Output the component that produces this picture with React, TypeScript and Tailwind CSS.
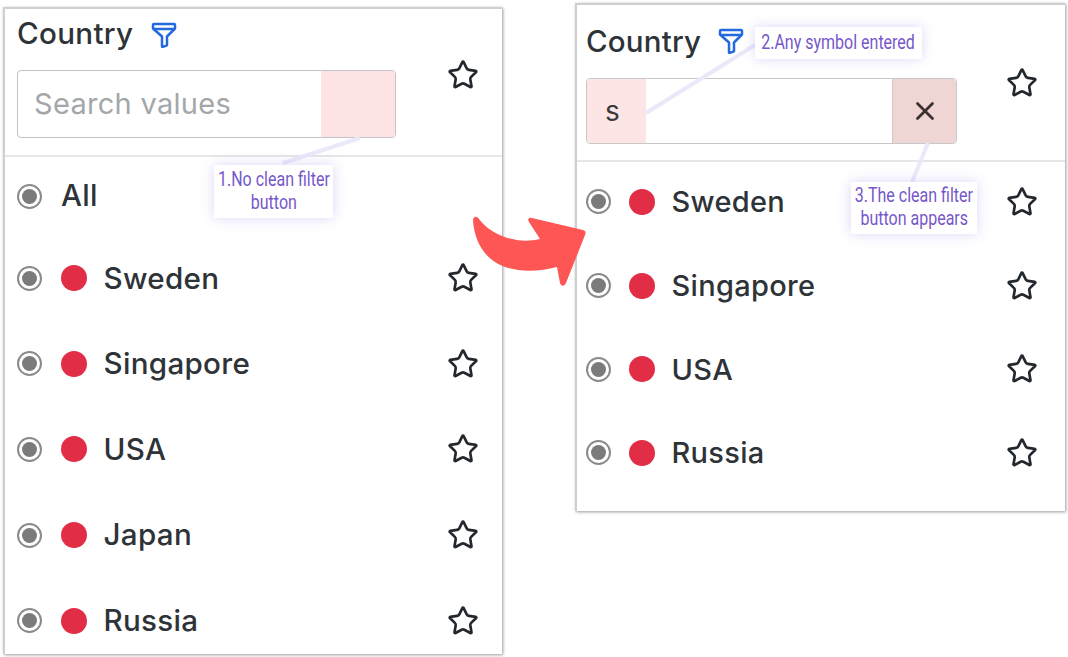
import React from 'react';
import { Star, X } from 'lucide-react';

const FilterIcon: React.FC = () => (
  <svg width="26" height="26" viewBox="0 0 26 26" fill="none" stroke="#2469e0" strokeWidth="2.5" strokeLinejoin="round" strokeLinecap="round">
    <path d="M3 2h20a1 1 0 0 1 1 1v3.500l-8 8v8.500l-.6.600-4 1.400-.4-.5V14.500l-9-8V3a1 1 0 0 1 1-1z" />
    <path d="M3 7h20" />
  </svg>
);

const Radio: React.FC = () => (
  <span className="flex h-[25px] w-[25px] shrink-0 items-center justify-center rounded-full border-2 border-[#8a8a8a] bg-white">
    <span className="h-[15px] w-[15px] rounded-full bg-[#7b7b7b]" />
  </span>
);

type RowProps = { name: string; height: string; dotGap: string; textSize: string; hideExtras?: boolean };

const Row: React.FC<RowProps> = ({ name, height, dotGap, textSize, hideExtras }) => (
  <div className={`flex items-center ${height}`}>
    <Radio />
    {!hideExtras && <span className={`h-[26px] w-[26px] shrink-0 rounded-full bg-[#e22d46] ${dotGap}`} />}
    <span className={`font-[450] leading-none tracking-[0.3px] text-[#2e3338] ${textSize} ${hideExtras ? 'ml-[19px]' : 'ml-[16.500px]'}`}>{name}</span>
    {!hideExtras && <Star className="ml-auto shrink-0" size={32} strokeWidth={2} color="#22282e" />}
  </div>
);

const Callout: React.FC<{ className: string; lines: string[] }> = ({ className, lines }) => (
  <div className={`absolute flex flex-col items-center justify-center bg-white pb-0.5 text-center text-[20px] leading-[23px] text-[#7657c9] shadow-[0_0_12px_rgba(120,90,220,0.25)] ${className}`}>
    {lines.map((l) => (
      <div key={l} className="scale-x-[0.8] whitespace-nowrap" style={{ fontFamily: 'Roboto, sans-serif' }}>{l}</div>
    ))}
  </div>
);

const panelClass = 'bg-white border-t-2 border-l-2 border-[#cfcfcf] shadow-[1px_1px_3px_rgba(0,0,0,0.4)]';

export default function App() {
  return (
    <div className="relative flex h-[657px] w-[1068px] items-start overflow-hidden bg-white" style={{ fontFamily: 'Inter, sans-serif' }}>
      {/* Left panel */}
      <section className={`ml-[3px] mt-[7px] h-[647px] w-[499px] shrink-0 ${panelClass}`}>
        <div className="h-[148px] border-b-2 border-[#e6e6e6] pl-3 pr-[23.500px]">
          <div className="flex items-center gap-[18px] pt-2.5">
            <h2 className="mb-1 text-[29.600px] font-[450] leading-[28px] tracking-[0.3px] text-[#2e3338]">Country</h2>
            <FilterIcon />
          </div>
          <div className="mt-[19px] flex items-center">
            <div className="flex h-[68px] w-[379px] overflow-hidden rounded border border-[#c4c4c4]">
              <div className="flex flex-1 items-center pl-4 text-[29px] tracking-[0.3px] text-[#a3a7aa]">Search values</div>
              <div className="w-[74px] bg-[#fde3e3]" />
            </div>
            <Star className="ml-auto -mt-[59px]" size={32} strokeWidth={2} color="#22282e" />
          </div>
        </div>
        <div className="pl-3 pr-[23.500px]">
          <Row name="All" height="h-[78.5px]" dotGap="ml-5" textSize="text-[29.600px]" hideExtras />
          <Row name="Sweden" height="h-[85.6px]" dotGap="ml-[19px]" textSize="text-[29.600px]" />
          <Row name="Singapore" height="h-[85.6px]" dotGap="ml-[19px]" textSize="text-[29.600px]" />
          <Row name="USA" height="h-[85.6px]" dotGap="ml-[19px]" textSize="text-[29.600px]" />
          <Row name="Japan" height="h-[85.6px]" dotGap="ml-[19px]" textSize="text-[29.600px]" />
          <Row name="Russia" height="h-[85.6px]" dotGap="ml-[19px]" textSize="text-[29.600px]" />
        </div>
      </section>

      {/* Right panel */}
      <section className={`ml-[73px] mt-[3px] h-[508px] w-[490px] shrink-0 ${panelClass}`}>
        <div className="h-[157px] border-b-2 border-[#e6e6e6] pl-[9px] pr-[27px]">
          <div className="flex items-center gap-[17px] pt-5">
            <h2 className="text-[29.500px] font-[450] leading-[32px] tracking-[0.2px] text-[#2e3338]">Country</h2>
            <FilterIcon />
          </div>
          <div className="mt-[21px] flex items-center">
            <div className="flex h-[66px] w-[371px] overflow-hidden rounded border border-[#c8c8c8]">
              <div className="flex w-[59px] items-center bg-[#fde5e5] pl-[18px] text-[28px] text-[#3a3a3a]">s</div>
              <div className="flex-1 bg-white" />
              <div className="flex w-[64px] items-center justify-center border-l border-[#dcc4c4] bg-[#f0d5d5]">
                <X size={30} strokeWidth={2.2} color="#3a3032" />
              </div>
            </div>
            <Star className="ml-auto -mt-[57px]" size={32} strokeWidth={2} color="#22282e" />
          </div>
        </div>
        <div className="-mt-0.5 pl-[9px] pr-[27px]">
          <Row name="Sweden" height="h-[83.7px]" dotGap="ml-[18px]" textSize="text-[29px]" />
          <Row name="Singapore" height="h-[83.7px]" dotGap="ml-[18px]" textSize="text-[29px]" />
          <Row name="USA" height="h-[83.7px]" dotGap="ml-[18px]" textSize="text-[29px]" />
          <Row name="Russia" height="h-[83.7px]" dotGap="ml-[18px]" textSize="text-[29px]" />
        </div>
      </section>

      {/* Annotation lines and arrow */}
      <svg className="absolute left-0 top-0" width="1068" height="657" fill="none">
        <path d="M283 163L360 138" stroke="#ebe8fa" strokeWidth="4" />
        <path d="M646 113L755 45" stroke="#ebe8fa" strokeWidth="4" />
        <path d="M928 143L912 182" stroke="#ebe8fa" strokeWidth="4" />
        <path
          d="M473 220C474 216 477 216 479 219C490 234 515 245 540 239L529 222C527 219 529 217 532 218L583 230C586 231 586 233 585 235L566 283C564 287 561 286 560 283L557 267C535 273 510 272 495 262C480 252 474 236 473 220Z"
          fill="#fe5555"
        />
      </svg>

      <Callout className="left-[214px] top-[165px] h-[53px] w-[119px]" lines={['1.No clean filter', 'button']} />
      <Callout className="left-[755px] top-[27px] h-[32px] w-[167px]" lines={['2.Any symbol entered']} />
      <Callout className="left-[851px] top-[182px] h-[52px] w-[126px]" lines={['3.The clean filter', 'button appears']} />
    </div>
  );
}
